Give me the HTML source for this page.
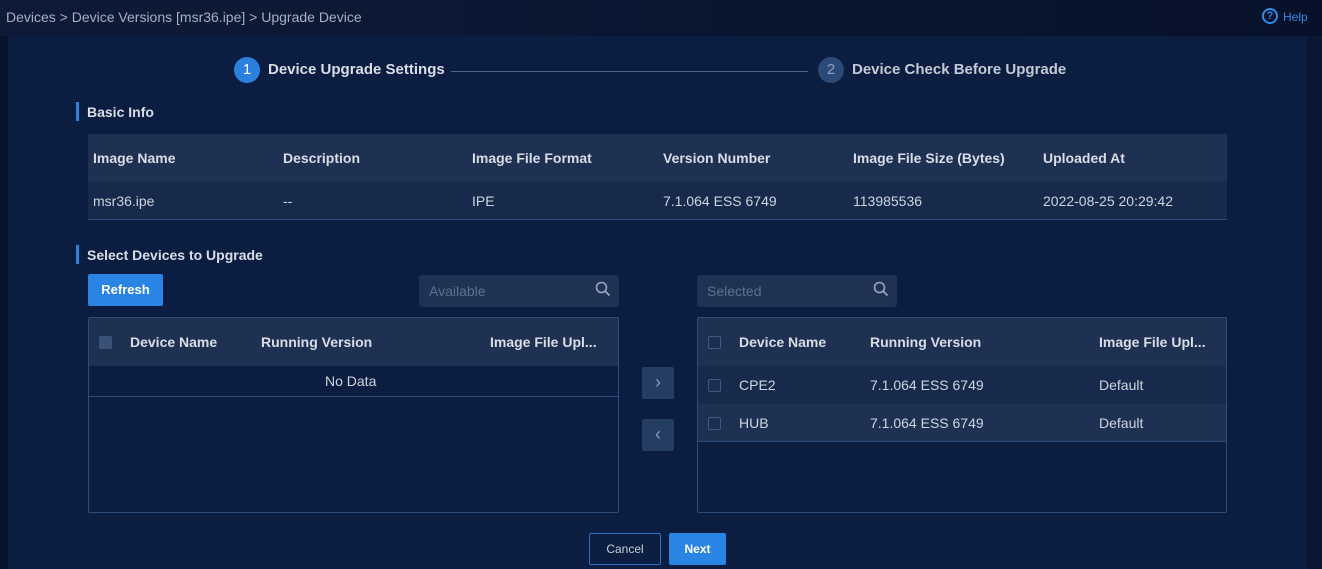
<!DOCTYPE html>
<html><head><style>
*{margin:0;padding:0;box-sizing:border-box}
body{width:1322px;height:569px;overflow:hidden;background:#08142e;font-family:"Liberation Sans",sans-serif;position:relative;color:#d4dae4}
.a{position:absolute}
.b{font-weight:bold;font-size:14px;color:#d8dde6}
.t{font-size:14px;color:#cfd5df}
.hdr{background:#1f3152}
.row{background:#172a4b}
.cb{position:absolute;width:13px;height:13px;border:1px solid #3f5a82;border-radius:2px;background:#1a2e50}
</style></head><body>
<div class="a" style="left:0;top:0;width:1322px;height:36px;background:linear-gradient(90deg,#0d1b38,#0a1630 60%,#07112a)"></div>
<div class="a" style="left:6px;top:9px;font-size:14px;color:#a6b0c2">Devices &gt; Device Versions [msr36.ipe] &gt; Upgrade Device</div>
<div class="a" style="left:1262px;top:8px;width:16px;height:16px;border:2px solid #2d8ae6;border-radius:50%;color:#2d8ae6;font-size:11px;font-weight:bold;text-align:center;line-height:12px">?</div>
<div class="a" style="left:1283px;top:10px;font-size:12px;color:#2d8ae6">Help</div>
<div class="a" style="left:8px;top:36px;width:1299px;height:533px;background:#0b1d40"></div>
<div class="a" style="left:1307px;top:36px;width:15px;height:533px;background:#0a1833"></div>

<div class="a" style="left:234px;top:57px;width:26px;height:26px;border-radius:50%;background:#2a80dd;color:#fff;text-align:center;line-height:26px;font-size:15px">1</div>
<div class="a b" style="left:268px;top:61px;font-size:15px">Device Upgrade Settings</div>
<div class="a" style="left:451px;top:71px;width:357px;height:1px;background:#4b6894"></div>
<div class="a" style="left:818px;top:57px;width:26px;height:26px;border-radius:50%;background:#2c4a78;color:#8ea2c0;text-align:center;line-height:26px;font-size:15px">2</div>
<div class="a b" style="left:852px;top:61px;font-size:15px;color:#c3cad6">Device Check Before Upgrade</div>

<div class="a" style="left:76px;top:102px;width:3px;height:19px;background:#2d84e0"></div>
<div class="a b" style="left:87px;top:104px">Basic Info</div>
<div class="a hdr" style="left:88px;top:134px;width:1139px;height:48px"></div>
<div class="a row" style="left:88px;top:182px;width:1139px;height:38px;border-bottom:1px solid #2d4d7e"></div>
<div class="a b" style="left:93px;top:150px">Image Name</div>
<div class="a b" style="left:283px;top:150px">Description</div>
<div class="a b" style="left:472px;top:150px">Image File Format</div>
<div class="a b" style="left:663px;top:150px">Version Number</div>
<div class="a b" style="left:853px;top:150px">Image File Size (Bytes)</div>
<div class="a b" style="left:1043px;top:150px">Uploaded At</div>
<div class="a t" style="left:93px;top:193px">msr36.ipe</div>
<div class="a t" style="left:283px;top:193px">--</div>
<div class="a t" style="left:472px;top:193px">IPE</div>
<div class="a t" style="left:663px;top:193px">7.1.064 ESS 6749</div>
<div class="a t" style="left:853px;top:193px">113985536</div>
<div class="a t" style="left:1043px;top:193px">2022-08-25 20:29:42</div>

<div class="a" style="left:76px;top:245px;width:3px;height:19px;background:#2d84e0"></div>
<div class="a b" style="left:87px;top:247px">Select Devices to Upgrade</div>
<div class="a" style="left:88px;top:274px;width:75px;height:32px;background:#2a84e4;border-radius:2px;color:#fff;font-size:13px;font-weight:bold;text-align:center;line-height:32px">Refresh</div>
<div class="a" style="left:419px;top:275px;width:200px;height:32px;background:#1f3253;border-radius:3px;color:#5f7191;font-size:14px;line-height:32px;padding-left:10px">Available</div>
<svg class="a" style="left:595px;top:281px" width="16" height="16" viewBox="0 0 16 16"><circle cx="6.5" cy="6.5" r="5" fill="none" stroke="#9aa7bc" stroke-width="1.6"/><path d="M10 10l4.5 4.5" stroke="#9aa7bc" stroke-width="1.8"/></svg>
<div class="a" style="left:697px;top:275px;width:200px;height:32px;background:#1f3253;border-radius:3px;color:#5f7191;font-size:14px;line-height:32px;padding-left:10px">Selected</div>
<svg class="a" style="left:873px;top:281px" width="16" height="16" viewBox="0 0 16 16"><circle cx="6.5" cy="6.5" r="5" fill="none" stroke="#9aa7bc" stroke-width="1.6"/><path d="M10 10l4.5 4.5" stroke="#9aa7bc" stroke-width="1.8"/></svg>

<div class="a" style="left:88px;top:317px;width:531px;height:196px;border:1px solid #2d4d7e;border-radius:2px"></div>
<div class="a hdr" style="left:89px;top:318px;width:529px;height:48px"></div>
<div class="a" style="left:89px;top:396px;width:529px;height:1px;background:#2d4d7e"></div>
<div class="cb" style="left:99px;top:336px;background:#3a5178;border-color:#3a5178"></div>
<div class="a b" style="left:130px;top:334px">Device Name</div>
<div class="a b" style="left:261px;top:334px">Running Version</div>
<div class="a b" style="left:490px;top:334px">Image File Upl...</div>
<div class="a t" style="left:325px;top:373px">No Data</div>

<div class="a" style="left:642px;top:367px;width:32px;height:32px;background:#253d62;border-radius:2px;color:#8c9cb6;text-align:center;line-height:30px;font-size:18px">›</div>
<div class="a" style="left:642px;top:419px;width:32px;height:32px;background:#253d62;border-radius:2px;color:#8c9cb6;text-align:center;line-height:30px;font-size:18px">‹</div>

<div class="a" style="left:697px;top:317px;width:530px;height:196px;border:1px solid #2d4d7e;border-radius:2px"></div>
<div class="a hdr" style="left:698px;top:318px;width:528px;height:48px"></div>
<div class="a row" style="left:698px;top:366px;width:528px;height:38px"></div>
<div class="a hdr" style="left:698px;top:404px;width:528px;height:38px;border-bottom:1px solid #2d4d7e"></div>
<div class="cb" style="left:708px;top:336px"></div>
<div class="a b" style="left:739px;top:334px">Device Name</div>
<div class="a b" style="left:870px;top:334px">Running Version</div>
<div class="a b" style="left:1099px;top:334px">Image File Upl...</div>
<div class="cb" style="left:708px;top:379px"></div>
<div class="a t" style="left:739px;top:377px">CPE2</div>
<div class="a t" style="left:870px;top:377px">7.1.064 ESS 6749</div>
<div class="a t" style="left:1099px;top:377px">Default</div>
<div class="cb" style="left:708px;top:417px"></div>
<div class="a t" style="left:739px;top:415px">HUB</div>
<div class="a t" style="left:870px;top:415px">7.1.064 ESS 6749</div>
<div class="a t" style="left:1099px;top:415px">Default</div>

<div class="a" style="left:589px;top:533px;width:72px;height:32px;border:1px solid #2d6fc0;border-radius:2px;color:#c8cfdb;font-size:12px;text-align:center;line-height:30px">Cancel</div>
<div class="a" style="left:669px;top:533px;width:57px;height:32px;background:#2a84e4;border-radius:2px;color:#fff;font-size:12px;font-weight:bold;text-align:center;line-height:32px">Next</div>
</body></html>
